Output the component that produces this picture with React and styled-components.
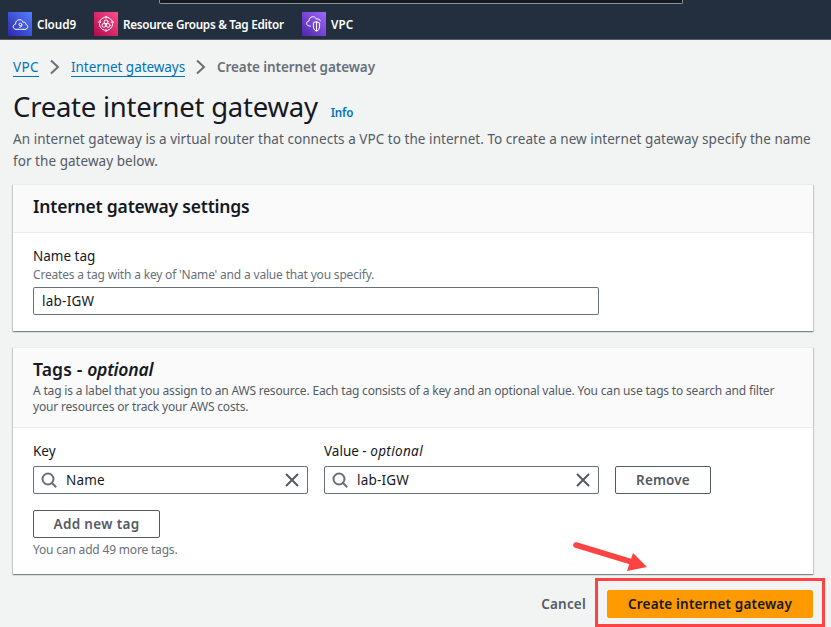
import React from 'react';
import styled, { createGlobalStyle, css } from 'styled-components';

const Global = createGlobalStyle`
  * { box-sizing: border-box; }
  body { margin: 0; background: #f2f3f3; overflow: hidden; }
  h1, h2, p { margin: 0; }
  button, input { font: inherit; letter-spacing: inherit; }
`;

const Page = styled.div`
  position: relative;
  width: 831px;
  height: 627px;
  overflow: hidden;
  font-family: 'Noto Sans', 'Open Sans', sans-serif;
  font-size: 13.5px;
  line-height: 22px;
  color: #16191f;
`;

const TopBar = styled.header`
  height: 40px;
  background: #232f3e;
  border-bottom: 1px solid #545b64;
`;

const SearchEdge = styled.div`
  width: 524px;
  height: 4px;
  margin-left: 159px;
  background: #16191f;
  border: 1px solid #879596;
  border-top: 0;
  border-radius: 0 0 2px 2px;
`;

const Favorites = styled.nav`
  display: flex;
  margin: 8px 0 0 8px;
`;

const Favorite = styled.a`
  display: flex;
  align-items: center;
  gap: 5px;
  width: ${(p) => p.$width}px;
  height: 24px;
  color: #fff;
  font-size: 11.7px;
  font-weight: 600;
  letter-spacing: ${(p) => p.$track}px;
  white-space: nowrap;
  svg { flex: none; }
`;

const Main = styled.main`
  padding: 16px 18px 0 13px;
`;

const Breadcrumbs = styled.nav`
  display: flex;
  align-items: center;
  height: 22px;
  svg { flex: none; margin: 0 8px; }
`;

const Crumb = styled.a`
  height: 20px;
  line-height: 20px;
  white-space: nowrap;
  width: ${(p) => p.$width}px;
  letter-spacing: ${(p) => p.$track}px;
  color: #0073bb;
  border-bottom: 1px solid #0073bb;
`;

const CurrentCrumb = styled.span`
  color: #687078;
  font-weight: 600;
  letter-spacing: -0.09px;
`;

const TitleRow = styled.div`
  display: flex;
  align-items: baseline;
  gap: 13px;
  height: 36px;
  margin-top: 11px;
`;

const Title = styled.h1`
  font-size: 27.5px;
  line-height: 36px;
  font-weight: 400;
  letter-spacing: -0.25px;
`;

const Info = styled.a`
  color: #0073bb;
  font-size: 11.6px;
  font-weight: 600;
  letter-spacing: -0.18px;
`;

const Description = styled.p`
  margin-top: 3px;
  color: #545b64;
  letter-spacing: 0.05px;
  white-space: nowrap;
`;

const Panel = styled.section`
  width: 800px;
  margin-top: ${(p) => p.$gap}px;
  background: #fff;
  border-top: 1px solid #eaeded;
  box-shadow: 0 1px 1px 0 rgba(0, 28, 36, 0.3), 1px 1px 1px 0 rgba(0, 28, 36, 0.15),
    -1px 1px 1px 0 rgba(0, 28, 36, 0.15);
`;

const PanelHeader = styled.div`
  height: ${(p) => p.$height}px;
  padding: 10px 20px 0;
  background: #fafafa;
  border-bottom: 1px solid #eaeded;
`;

const PanelTitle = styled.h2`
  font-size: 17.5px;
  line-height: 22px;
  font-weight: 600;
  letter-spacing: ${(p) => p.$track}px;
  em { letter-spacing: -0.2px; }
`;

const PanelBody = styled.div`
  height: ${(p) => p.$height}px;
  padding: 12px 20px 0;
`;

const Hint = styled.p`
  margin-top: ${(p) => p.$top || 0}px;
  font-size: 12px;
  line-height: 16px;
  color: ${(p) => (p.$dark ? '#545b64' : '#687078')};
  letter-spacing: -0.18px;
  white-space: nowrap;
`;

const Label = styled.div`
  line-height: 22px;
  em { letter-spacing: 0.35px; }
`;

const fieldFrame = css`
  height: 28px;
  background: #fff;
  border: 1px solid #687078;
  border-radius: 2px;
`;

const TextInput = styled.input`
  ${fieldFrame}
  display: block;
  width: 566px;
  margin-top: 4px;
  padding: 0 8px 1px;
  color: #16191f;
  letter-spacing: 0.25px;
  outline: 0;
`;

const TagRow = styled.div`
  display: flex;
  align-items: flex-end;
  gap: 16px;
`;

const Field = styled.div`
  width: 275px;
`;

const SearchBox = styled.div`
  ${fieldFrame}
  display: flex;
  align-items: center;
  margin-top: 4px;
  padding: 0 7px;
`;

const SearchInput = styled.input`
  flex: 1;
  min-width: 0;
  height: 24px;
  padding: 0 0 1px;
  margin-left: 9px;
  border: 0;
  outline: 0;
  color: #16191f;
  letter-spacing: 0.2px;
`;

const Button = styled.button`
  width: ${(p) => p.$width}px;
  height: 28px;
  padding: 0;
  background: ${(p) => (p.$primary ? '#ff9900' : '#fff')};
  color: ${(p) => (p.$primary ? '#16191f' : '#545b64')};
  border: 1px solid ${(p) => (p.$primary ? '#ff9900' : '#545b64')};
  border-radius: 2px;
  font-weight: 600;
  letter-spacing: ${(p) => p.$track || 0.25}px;
  white-space: nowrap;
`;

const AddRow = styled.div`
  margin: 16px 0 4px;
  display: flex;
`;

const Actions = styled.footer`
  display: flex;
  align-items: center;
  justify-content: flex-end;
  gap: 21px;
  margin-top: 16px;
`;

const Cancel = styled.a`
  color: #545b64;
  font-weight: 600;
  letter-spacing: 0.2px;
`;

const Highlight = styled.div`
  position: absolute;
  left: 595px;
  top: 578px;
  width: 230px;
  height: 49px;
  border: 3px solid #ff4343;
`;

const Arrow = styled.svg`
  position: absolute;
  left: 565px;
  top: 535px;
`;

const Tile = ({ id, from, to, children }) => (
  <svg width="24" height="24" viewBox="0 0 24 24" fill="none" stroke="#fff" strokeLinecap="round" strokeLinejoin="round">
    <linearGradient id={id} x1="0" y1="1" x2="1" y2="0">
      <stop stopColor={from} />
      <stop offset="1" stopColor={to} />
    </linearGradient>
    <path d="M0 0h24v24H0z" fill={`url(#${id})`} stroke="none" />
    {children}
  </svg>
);

const Cloud9Icon = () => (
  <Tile id="blue" from="#2e27ad" to="#527fff">
    <path d="M10 17.3H8C4.5 17.3 4.2 12.7 7.5 12.2C7.5 6.8 13.8 6.3 15.2 10.3C17 9.7 17.8 11 17.8 12.4C20.7 13 20.3 17.3 17 17.3H15" />
    <path d="M10 17.3h5M13.8 12.5a1.4 1.3 0 1 1-2.8 0a1.4 1.3 0 1 1 2.8 0v1.2q0 1.6-2.3 1.5" strokeWidth=".9" />
  </Tile>
);

const GroupsIcon = () => (
  <Tile id="pink" from="#b0084d" to="#ff4f8b">
    <path d="M10.3 5.3A7 7 0 0 0 6 8.6M5.4 12.2a7 7 0 0 0 4.8 6M13.7 5.3A7 7 0 0 1 18 8.6M18.6 12.2a7 7 0 0 1-4.8 6" />
    <circle cx="12" cy="5.2" r=".9" /><circle cx="5.7" cy="10.2" r=".9" /><circle cx="18.3" cy="10.2" r=".9" />
    <circle cx="12" cy="9.8" r="1.9" /><circle cx="9.9" cy="13.4" r="1.9" /><circle cx="14.1" cy="13.4" r="1.9" />
    <circle cx="12" cy="18.5" r=".9" />
  </Tile>
);

const VpcIcon = () => (
  <Tile id="purple" from="#4d27a8" to="#a166ff">
    <path d="M8.5 14.2C3.7 14.3 3.5 9.6 7 9C7 4.2 13 3.2 14.5 7.2C16.5 6.5 18 7.6 18.4 8.8" />
    <path d="M14.5 9.8l3.1 1.2v4q0 2.8-3.1 4.3q-3.1-1.5-3.1-4.3v-4zM14.5 10v9" />
  </Tile>
);

const Chevron = () => (
  <svg width="16" height="16" viewBox="0 0 16 16" fill="none" stroke="#687078" strokeWidth="2">
    <path d="M4 1.5l7 6.5-7 6.5" />
  </svg>
);

const SearchIcon = () => (
  <svg width="16" height="16" viewBox="0 0 16 16" fill="none" stroke="#687078" strokeWidth="2">
    <circle cx="7" cy="7" r="5.5" />
    <path d="M11 11l4.2 4.2" />
  </svg>
);

const CloseIcon = () => (
  <svg width="16" height="16" viewBox="0 0 16 16" fill="none" stroke="#545b64" strokeWidth="2">
    <path d="M2 2l12 12M14 2L2 14" />
  </svg>
);

const TagField = ({ label, value }) => (
  <Field>
    <Label>{label}</Label>
    <SearchBox>
      <SearchIcon />
      <SearchInput defaultValue={value} />
      <CloseIcon />
    </SearchBox>
  </Field>
);

export default function App() {
  return (
    <Page>
      <Global />
      <TopBar>
        <SearchEdge />
        <Favorites>
          <Favorite $width={86} $track={-0.07}><Cloud9Icon />Cloud9</Favorite>
          <Favorite $width={208} $track={-0.27}><GroupsIcon />Resource Groups &amp; Tag Editor</Favorite>
          <Favorite $width={60} $track={0.1}><VpcIcon />VPC</Favorite>
        </Favorites>
      </TopBar>
      <Main>
        <Breadcrumbs>
          <Crumb $width={26} $track={0.35}>VPC</Crumb>
          <Chevron />
          <Crumb $width={114} $track={-0.05}>Internet gateways</Crumb>
          <Chevron />
          <CurrentCrumb>Create internet gateway</CurrentCrumb>
        </Breadcrumbs>
        <TitleRow>
          <Title>Create internet gateway</Title>
          <Info>Info</Info>
        </TitleRow>
        <Description>
          An internet gateway is a virtual router that connects a VPC to the internet. To create a new internet gateway specify the name
          <br />
          for the gateway below.
        </Description>
        <Panel $gap={12}>
          <PanelHeader $height={48}>
            <PanelTitle $track={-0.2}>Internet gateway settings</PanelTitle>
          </PanelHeader>
          <PanelBody $height={98}>
            <Label>Name tag</Label>
            <Hint>Creates a tag with a key of 'Name' and a value that you specify.</Hint>
            <TextInput defaultValue="lab-IGW" />
          </PanelBody>
        </Panel>
        <Panel $gap={16}>
          <PanelHeader $height={80}>
            <PanelTitle $track={0.15}>Tags - <em>optional</em></PanelTitle>
            <Hint $dark $top={3}>
              A tag is a label that you assign to an AWS resource. Each tag consists of a key and an optional value. You can use tags to search and filter
              <br />
              your resources or track your AWS costs.
            </Hint>
          </PanelHeader>
          <PanelBody $height={146}>
            <TagRow>
              <TagField label="Key" value="Name" />
              <TagField label={<>Value - <em>optional</em></>} value="lab-IGW" />
              <Button $width={96} $track={0.15}>Remove</Button>
            </TagRow>
            <AddRow><Button $width={127} $track={0.34}>Add new tag</Button></AddRow>
            <Hint>You can add 49 more tags.</Hint>
          </PanelBody>
        </Panel>
        <Actions>
          <Cancel>Cancel</Cancel>
          <Button $primary $width={206} $track={0.17}>Create internet gateway</Button>
        </Actions>
      </Main>
      <Arrow width="90" height="40" viewBox="0 0 90 40">
        <path d="M11 10L67 27" stroke="#ff4343" strokeWidth="5.5" strokeLinecap="round" />
        <path d="M68 18l14 14-20 4z" fill="#ff4343" />
      </Arrow>
      <Highlight />
    </Page>
  );
}
